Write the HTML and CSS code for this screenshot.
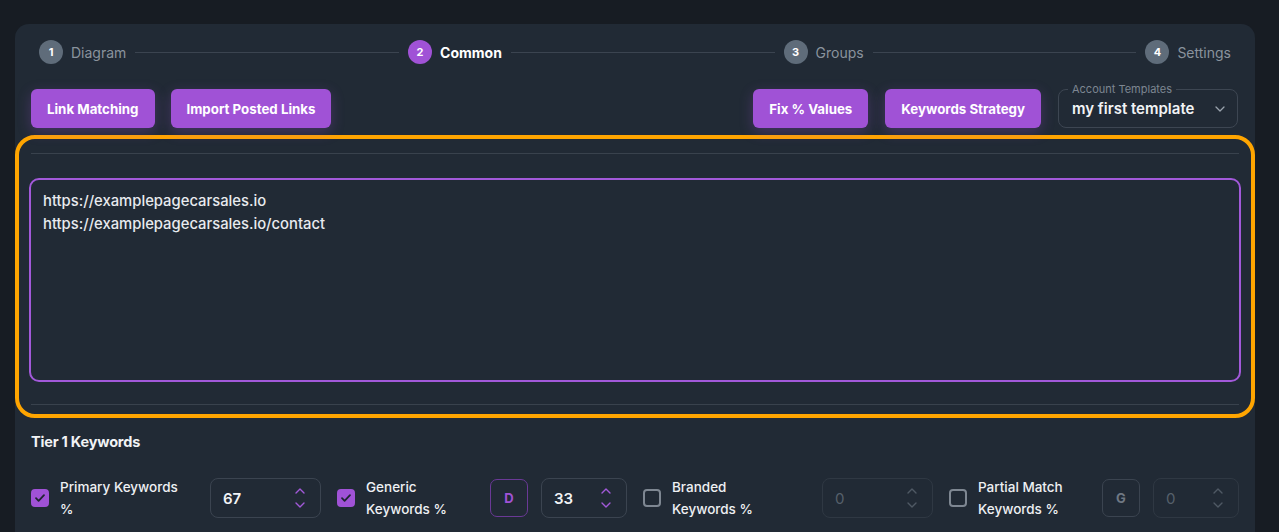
FILE: index.html
```html
<!DOCTYPE html>
<html lang="en">
<head>
<meta charset="utf-8">
<title>Common</title>
<link rel="stylesheet" href="styles.css">
</head>
<body>
<div class="card">
  <div class="stepper">
    <div class="step"><span class="dot">1</span><span class="step-label">Diagram</span></div>
    <div class="line"></div>
    <div class="step active"><span class="dot">2</span><span class="step-label">Common</span></div>
    <div class="line"></div>
    <div class="step"><span class="dot">3</span><span class="step-label">Groups</span></div>
    <div class="line"></div>
    <div class="step"><span class="dot">4</span><span class="step-label">Settings</span></div>
  </div>

  <div class="toolbar">
    <div class="group">
      <button class="btn">Link Matching</button>
      <button class="btn">Import Posted Links</button>
    </div>
    <div class="group group-right">
      <button class="btn">Fix % Values</button>
      <button class="btn">Keywords Strategy</button>
      <div class="select">
        <span class="select-label">Account Templates</span>
        <span class="select-value">my first template</span>
        <svg class="select-chev" width="10" height="6" viewBox="0 0 10 6"><path d="M1 1l4 4 4-4" fill="none" stroke="#9aa3ad" stroke-width="1.3" stroke-linecap="round" stroke-linejoin="round"/></svg>
      </div>
    </div>
  </div>

  <section class="highlight">
    <hr class="rule">
    <textarea class="links" spellcheck="false">https://examplepagecarsales.io
https://examplepagecarsales.io/contact</textarea>
    <hr class="rule rule-bottom">
  </section>

  <h3 class="tier">Tier 1 Keywords</h3>

  <div class="kw-grid">
    <div class="kw">
      <span class="check on"><svg width="12" height="10" viewBox="0 0 12 10"><path d="M2 5.2l2.6 2.6L10 2.2" fill="none" stroke="#1e2530" stroke-width="1.8" stroke-linecap="round" stroke-linejoin="round"/></svg></span>
      <span class="kw-label">Primary Keywords %</span>
      <div class="num wide"><span class="num-val">67</span><span class="spin"><svg width="10" height="6" viewBox="0 0 10 6"><path d="M1 5l4-4 4 4" fill="none" stroke="#a259d9" stroke-width="1.4" stroke-linecap="round" stroke-linejoin="round"/></svg><svg width="10" height="6" viewBox="0 0 10 6"><path d="M1 1l4 4 4-4" fill="none" stroke="#a259d9" stroke-width="1.4" stroke-linecap="round" stroke-linejoin="round"/></svg></span></div>
    </div>
    <div class="kw">
      <span class="check on"><svg width="12" height="10" viewBox="0 0 12 10"><path d="M2 5.2l2.6 2.6L10 2.2" fill="none" stroke="#1e2530" stroke-width="1.8" stroke-linecap="round" stroke-linejoin="round"/></svg></span>
      <span class="kw-label">Generic Keywords %</span>
      <span class="tag tag-on">D</span>
      <div class="num"><span class="num-val">33</span><span class="spin"><svg width="10" height="6" viewBox="0 0 10 6"><path d="M1 5l4-4 4 4" fill="none" stroke="#a259d9" stroke-width="1.4" stroke-linecap="round" stroke-linejoin="round"/></svg><svg width="10" height="6" viewBox="0 0 10 6"><path d="M1 1l4 4 4-4" fill="none" stroke="#a259d9" stroke-width="1.4" stroke-linecap="round" stroke-linejoin="round"/></svg></span></div>
    </div>
    <div class="kw">
      <span class="check"></span>
      <span class="kw-label">Branded Keywords %</span>
      <div class="num wide off"><span class="num-val">0</span><span class="spin"><svg width="10" height="6" viewBox="0 0 10 6"><path d="M1 5l4-4 4 4" fill="none" stroke="#4f5964" stroke-width="1.4" stroke-linecap="round" stroke-linejoin="round"/></svg><svg width="10" height="6" viewBox="0 0 10 6"><path d="M1 1l4 4 4-4" fill="none" stroke="#4f5964" stroke-width="1.4" stroke-linecap="round" stroke-linejoin="round"/></svg></span></div>
    </div>
    <div class="kw">
      <span class="check"></span>
      <span class="kw-label">Partial Match Keywords %</span>
      <span class="tag">G</span>
      <div class="num off"><span class="num-val">0</span><span class="spin"><svg width="10" height="6" viewBox="0 0 10 6"><path d="M1 5l4-4 4 4" fill="none" stroke="#4f5964" stroke-width="1.4" stroke-linecap="round" stroke-linejoin="round"/></svg><svg width="10" height="6" viewBox="0 0 10 6"><path d="M1 1l4 4 4-4" fill="none" stroke="#4f5964" stroke-width="1.4" stroke-linecap="round" stroke-linejoin="round"/></svg></span></div>
    </div>
  </div>
</div>
</body>
</html>
```

FILE: styles.css
```css
* { box-sizing: border-box; }

html, body {
  margin: 0;
  background: #171c23;
  overflow: hidden;
}

body {
  font-family: Inter, "Noto Sans", sans-serif;
  color: #e8ebef;
  height: 532px;
}

.card {
  margin: 24px 0 0 15px;
  width: 1240px;
  height: 600px;
  background: #212a35;
  border-radius: 14px;
  padding: 16px 16px 0;
}

/* stepper */
.stepper {
  display: flex;
  align-items: center;
  height: 24px;
  padding: 0 8px;
}
.step {
  display: flex;
  align-items: center;
  gap: 8px;
}
.dot {
  width: 24px;
  height: 24px;
  border-radius: 50%;
  background: #5f6c7a;
  color: #fff;
  font-size: 11px;
  font-weight: 700;
  display: flex;
  align-items: center;
  justify-content: center;
}
.step-label {
  font-size: 14px;
  color: #8a939d;
}
.step.active .dot { background: #a052d6; }
.step.active .step-label { color: #fff; font-weight: 700; }
.line {
  flex: 1;
  height: 1px;
  background: #3b4450;
  margin: 0 9px;
}

/* toolbar */
.toolbar {
  margin-top: 25px;
  display: flex;
  justify-content: space-between;
  align-items: center;
  padding-right: 1px;
}
.group {
  display: flex;
  align-items: center;
  gap: 16px;
}
.group-right { gap: 17px; }
.btn {
  height: 39px;
  padding: 0 16px;
  border: 0;
  border-radius: 6px;
  background: #a052d6;
  color: #fff;
  font-family: Inter, "Noto Sans", sans-serif;
  font-size: 13.3px;
  font-weight: 700;
  letter-spacing: 0;
  box-shadow: 0 4px 14px rgba(160, 82, 214, 0.28);
}
.select {
  position: relative;
  width: 180px;
  height: 39px;
  border: 1px solid #3d4652;
  border-radius: 8px;
  display: flex;
  align-items: center;
  padding: 0 13px;
}
.select-label {
  position: absolute;
  top: -8px;
  left: 9px;
  padding: 0 4px;
  background: #212a35;
  font-size: 11px;
  color: #7d8691;
  line-height: 14px;
}
.select-value {
  flex: 1;
  font-size: 15px;
  font-weight: 600;
  color: #f1f3f5;
}
.select-chev { margin-right: -1px; }

/* highlighted section */
.highlight {
  margin: 7px -16px 0;
  border: 4px solid #ffa500;
  border-radius: 20px;
  padding: 14px 12px 9px;
}
.rule {
  margin: 0;
  border: 0;
  height: 1px;
  background: #39424d;
}
.rule-bottom { margin-top: 22px; }
.links {
  display: block;
  width: calc(100% + 4px);
  margin: 24px -2px 0;
  height: 204px;
  border: 2px solid #a259d9;
  border-radius: 10px;
  background: transparent;
  color: #e8ebef;
  font-family: Inter, "Noto Sans", sans-serif;
  font-size: 14.8px;
  font-weight: 500;
  line-height: 23px;
  padding: 10px 12px;
  resize: none;
  outline: none;
}

.tier {
  margin: 14px 0 0;
  font-size: 14.5px;
  font-weight: 700;
  line-height: 20px;
  color: #f1f3f5;
  letter-spacing: -0.2px;
}

/* keyword rows */
.kw-grid {
  margin-top: 26px;
  display: grid;
  grid-template-columns: repeat(4, 290px);
  gap: 16px;
}
.kw {
  display: flex;
  align-items: center;
  height: 40px;
}
.check {
  width: 18px;
  height: 18px;
  flex: none;
  border: 2px solid #7e8792;
  border-radius: 4px;
  margin-right: 11px;
  display: flex;
  align-items: center;
  justify-content: center;
}
.check.on {
  background: #a052d6;
  border-color: #a052d6;
}
.kw-label {
  flex: 1;
  max-width: 120px;
  margin-right: auto;
  font-size: 13.5px;
  font-weight: 500;
  line-height: 22px;
  color: #eef0f3;
}
.kw-label + .num,
.kw-label + .tag { margin-left: 12px; }
.tag {
  width: 38px;
  height: 38px;
  flex: none;
  border: 1px solid #3b4450;
  border-radius: 7px;
  display: flex;
  align-items: center;
  justify-content: center;
  font-size: 13px;
  font-weight: 700;
  color: #6f7883;
  margin-right: 13px;
}
.tag-on {
  border-color: #6a3996;
  color: #a052d6;
}
.num {
  width: 86px;
  height: 40px;
  flex: none;
  border: 1px solid #3b4450;
  border-radius: 8px;
  display: flex;
  align-items: center;
  padding: 0 12px;
}
.num.wide { width: 111px; }
.num-val {
  flex: 1;
  font-size: 15px;
  font-weight: 600;
  color: #f1f3f5;
}
.num.off { border-color: #2f3843; }
.num.off .num-val { color: #56606b; font-weight: 400; }
.spin {
  display: flex;
  flex-direction: column;
  gap: 8px;
  margin-right: 3px;
}
.spin svg { display: block; }
```
